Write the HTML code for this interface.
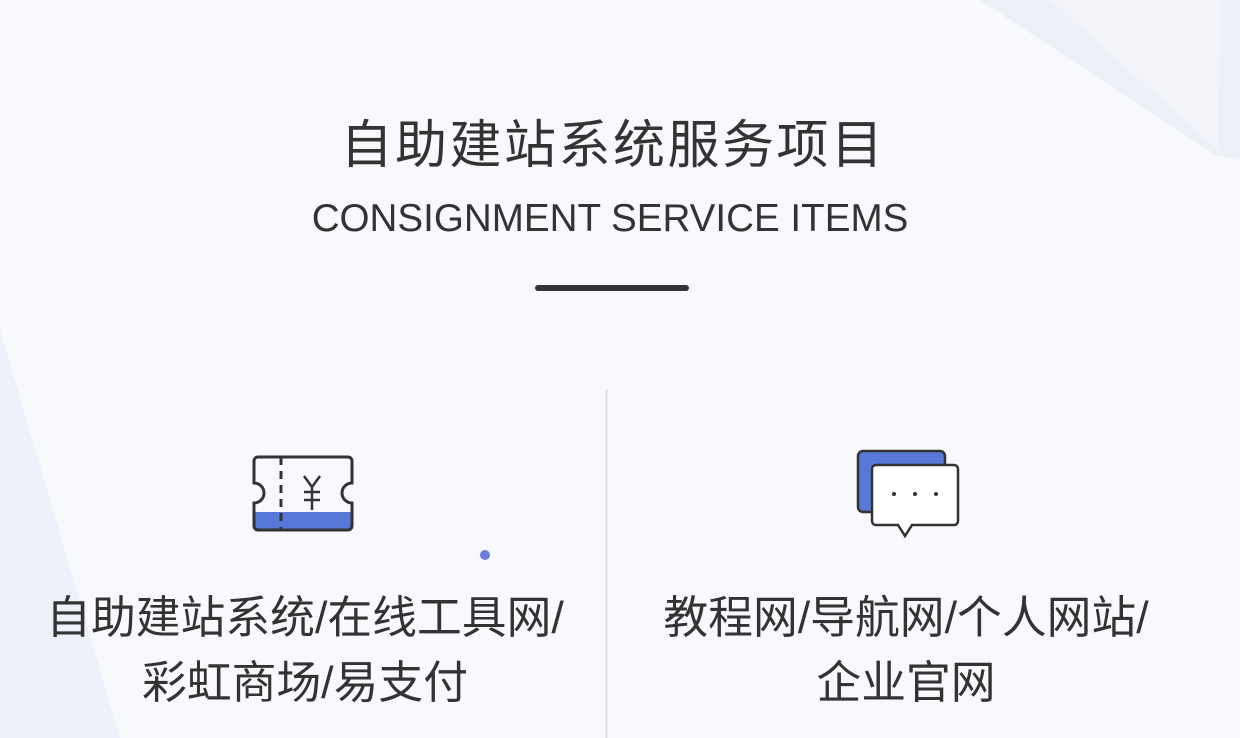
<!DOCTYPE html>
<html><head><meta charset="utf-8"><style>
body{margin:0;width:1240px;height:738px;overflow:hidden;background:#f8f9fd;font-family:"Liberation Sans","Noto Sans CJK SC",sans-serif;position:relative;color:#333}
.a{position:absolute;left:0;width:1240px;text-align:center}
</style></head><body>
<svg style="position:absolute;left:0;top:0" width="1240" height="738">
<polygon points="980,0 1240,0 1240,160 1215,155" fill="#eef0f8"/>
<polygon points="1050,0 1220,0 1218,150" fill="#f2f4fa"/>
<polygon points="0,330 0,738 120,738" fill="#eef1fa"/>
<line x1="606.5" y1="390" x2="606.5" y2="738" stroke="#dcdde2" stroke-width="2"/>
<rect x="535" y="285" width="154" height="6" rx="3" fill="#333"/>
<circle cx="485" cy="555" r="5" fill="#6b7fe0"/>
<path d="M254,512 H352 V526 a4,4 0 0 1 -4,4 H258 a4,4 0 0 1 -4,-4Z" fill="#5878d8"/>
<path d="M258,457 H348 a4,4 0 0 1 4,4 V483 a10,10 0 0 0 0,20 V526 a4,4 0 0 1 -4,4 H258 a4,4 0 0 1 -4,-4 V503 a10,10 0 0 0 0,-20 V461 a4,4 0 0 1 4,-4Z" fill="none" stroke="#333" stroke-width="3"/>
<line x1="281" y1="457" x2="281" y2="530" stroke="#333" stroke-width="3" stroke-dasharray="8,6"/>
<path d="M304,476 L312,487 L320,476 M312,487 V510 M304,492 H320 M304,500 H320" fill="none" stroke="#333" stroke-width="2.5"/>
<rect x="858" y="451" width="87" height="61" rx="5" fill="#5878d8" stroke="#333" stroke-width="2.5"/>
<path d="M876,465 H954 a4,4 0 0 1 4,4 V521 a4,4 0 0 1 -4,4 H912 L905,536 L898,525 H876 a4,4 0 0 1 -4,-4 V469 a4,4 0 0 1 4,-4Z" fill="#fff" stroke="#333" stroke-width="2.5"/>
<circle cx="894" cy="494" r="2" fill="#333"/><circle cx="915" cy="494" r="2" fill="#333"/><circle cx="936" cy="494" r="2" fill="#333"/>
</svg>
<div class="a" style="top:114px;font-size:52px;letter-spacing:2.5px;left:-7px;line-height:64px">自助建站系统服务项目</div>
<div class="a" style="top:196px;font-size:38.6px;line-height:46px;left:-10px">CONSIGNMENT SERVICE ITEMS</div>
<div style="position:absolute;left:0;width:610px;top:586px;text-align:center;font-size:44.8px;line-height:65px">自助建站系统/在线工具网/<br>彩虹商场/易支付</div>
<div style="position:absolute;left:606px;width:600px;top:586px;text-align:center;font-size:44.8px;line-height:65px">教程网/导航网/个人网站/<br>企业官网</div>
</body></html>
